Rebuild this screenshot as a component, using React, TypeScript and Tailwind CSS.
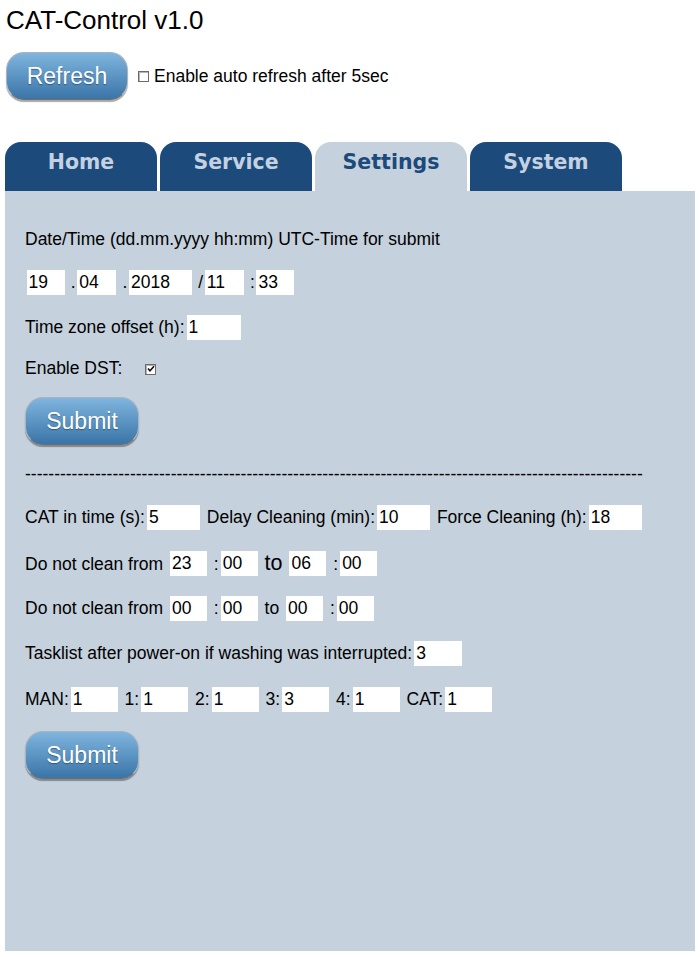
import React from 'react';

const sans = "font-['Liberation_Sans',Arial,sans-serif]";

function Field({ w, v, tight }: { w: number; v: string; tight?: boolean }) {
  return (
    <input
      readOnly
      value={v}
      style={{ width: w }}
      className={`${sans} ${tight ? 'mx-[1.5px]' : 'mx-[2px]'} inline-block h-[25px] align-top bg-white px-[2px] text-[17.5px] text-black outline-none`}
    />
  );
}

function Box({ checked }: { checked?: boolean }) {
  return (
    <span className="inline-flex h-[11px] w-[11px] items-center justify-center border border-[#6b6b6b] bg-white align-middle shadow-[inset_1px_1px_0_#b5b5b5]">
      {checked && (
        <svg width="8" height="8" viewBox="0 0 8 8">
          <path d="M1 3.5 L3 5.8 L7 1.2" fill="none" stroke="#111" strokeWidth="1.6" />
        </svg>
      )}
    </span>
  );
}

function BlueButton({ label, w }: { label: string; w: string }) {
  return (
    <button
      className={`${sans} ${w} h-[48px] rounded-[18px] border border-[#a9b4bf] border-b-[#6e6e6e] bg-gradient-to-b from-[#7fb5de] to-[#3a75a8] text-[23px] text-white [text-shadow:0_1px_1px_rgba(0,0,0,0.35)] shadow-[0_2px_1px_rgba(0,0,0,0.35)]`}
    >
      {label}
    </button>
  );
}

function Row({ children, mt }: { children: React.ReactNode; mt: string }) {
  return <div className={`${mt} h-[25px] whitespace-nowrap leading-[25px] text-[17.5px] text-black`}>{children}</div>;
}

export default function App() {
  const tabs = ['Home', 'Service', 'Settings', 'System'];

  return (
    <div className={`${sans} h-[957px] w-[700px] bg-white`}>
      <div className="pl-[6px] pt-[4px] text-[26px] leading-[32px] text-black">CAT-Control v1.0</div>

      <div className="mt-[16px] flex items-center pl-[6px]">
        <BlueButton label="Refresh" w="w-[122px]" />
        <span className="ml-[10px] flex items-center text-[17.5px] text-black">
          <Box />
          <span className="ml-[5px]">Enable auto refresh after 5sec</span>
        </span>
      </div>

      {/* Reiter */}
      <div className="mt-[42px] flex gap-[3px] pl-[5px]">
        {tabs.map((t) => (
          <div
            key={t}
            className={`h-[49px] w-[152px] rounded-t-[16px] pt-[5px] text-center font-['DejaVu_Sans',Verdana,sans-serif] text-[20.5px] font-bold ${
              t === 'Settings' ? 'bg-[#c5d1dd] text-[#1b4a7b]' : 'bg-[#1b4a7b] text-[#c3d1e1]'
            }`}
          >
            {t}
          </div>
        ))}
      </div>

      <div className="mx-[5px] h-[760px] bg-[#c5d1dd] pl-[20px] pt-[36px]">
        <Row mt="mt-0">Date/Time (dd.mm.yyyy hh:mm) UTC-Time for submit</Row>
        <Row mt="mt-[18px]">
          <Field tight w={38} v="19" /> .<Field tight w={39} v="04" /> .<Field tight w={63} v="2018" /> /
          <Field tight w={39} v="11" /> :<Field tight w={38} v="33" />
        </Row>
        <Row mt="mt-[20px]">
          Time zone offset (h):<Field w={54} v="1" />
        </Row>
        <Row mt="mt-[16px]">
          Enable DST: <span className="ml-[18px]"><Box checked /></span>
        </Row>
        <div className="mt-[16px]">
          <BlueButton label="Submit" w="w-[114px]" />
        </div>
        <Row mt="mt-[17px]">{'-'.repeat(106)}</Row>
        <Row mt="mt-[18px]">
          CAT in time (s):<Field w={53} v="5" /> Delay Cleaning (min):<Field w={53} v="10" /> Force Cleaning (h):
          <Field w={53} v="18" />
        </Row>
        <Row mt="mt-[21px]">
          Do not clean from <Field w={37} v="23" /> :<Field w={37} v="00" /> <span className="text-[21.5px]">to</span>{' '}
          <Field w={37} v="06" /> :<Field w={37} v="00" />
        </Row>
        <Row mt="mt-[20px]">
          Do not clean from <Field w={37} v="00" /> :<Field w={37} v="00" /> to <Field w={37} v="00" /> :
          <Field w={37} v="00" />
        </Row>
        <Row mt="mt-[20px]">
          Tasklist after power-on if washing was interrupted:<Field w={48} v="3" />
        </Row>
        <Row mt="mt-[21px]">
          MAN:<Field w={47} v="1" /> 1:<Field w={47} v="1" /> 2:<Field w={47} v="1" /> 3:<Field w={47} v="3" /> 4:
          <Field w={47} v="1" /> CAT:<Field w={47} v="1" />
        </Row>
        <div className="mt-[19px]">
          <BlueButton label="Submit" w="w-[114px]" />
        </div>
      </div>
    </div>
  );
}
